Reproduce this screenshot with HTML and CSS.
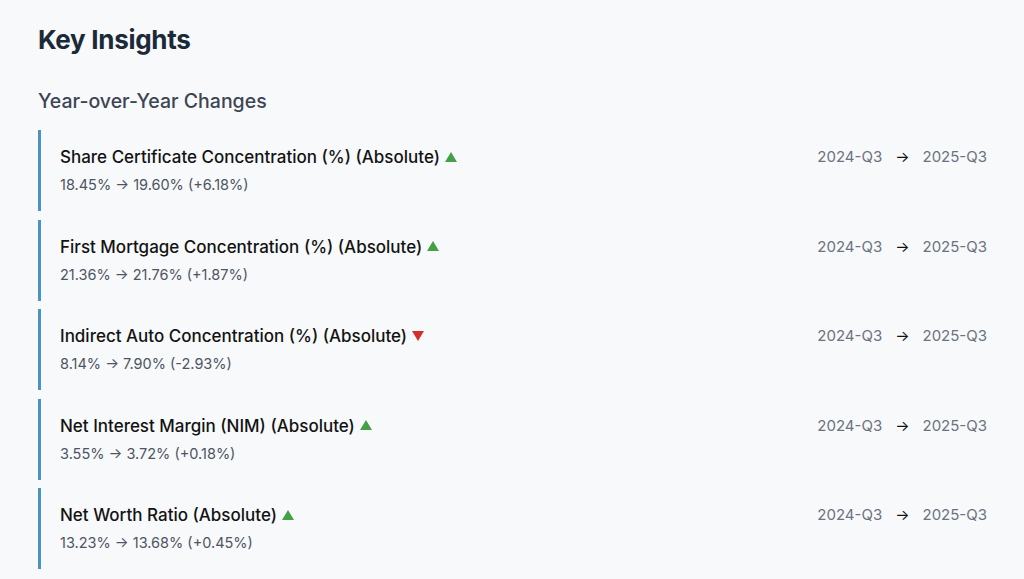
FILE: index.html
```html
<!DOCTYPE html>
<html>
<head>
<meta charset="utf-8">
<link rel="stylesheet" href="styles.css">
</head>
<body>
<main class="page">
  <h1 class="title">Key Insights</h1>
  <h2 class="subtitle">Year-over-Year Changes</h2>
  <div class="list">
    <div class="card">
      <div class="info">
        <div class="name">Share Certificate Concentration (%) (Absolute)<svg class="tri up" viewBox="0 0 12 10"><path d="M6 0L12 10H0Z"/></svg></div>
        <div class="value">18.45% → 19.60% (+6.18%)</div>
      </div>
      <div class="period"><span>2024-Q3</span><span class="arrow">→</span><span>2025-Q3</span></div>
    </div>
    <div class="card">
      <div class="info">
        <div class="name">First Mortgage Concentration (%) (Absolute)<svg class="tri up" viewBox="0 0 12 10"><path d="M6 0L12 10H0Z"/></svg></div>
        <div class="value">21.36% → 21.76% (+1.87%)</div>
      </div>
      <div class="period"><span>2024-Q3</span><span class="arrow">→</span><span>2025-Q3</span></div>
    </div>
    <div class="card">
      <div class="info">
        <div class="name">Indirect Auto Concentration (%) (Absolute)<svg class="tri down" viewBox="0 0 12 10"><path d="M0 0H12L6 10Z"/></svg></div>
        <div class="value">8.14% → 7.90% (-2.93%)</div>
      </div>
      <div class="period"><span>2024-Q3</span><span class="arrow">→</span><span>2025-Q3</span></div>
    </div>
    <div class="card">
      <div class="info">
        <div class="name">Net Interest Margin (NIM) (Absolute)<svg class="tri up" viewBox="0 0 12 10"><path d="M6 0L12 10H0Z"/></svg></div>
        <div class="value">3.55% → 3.72% (+0.18%)</div>
      </div>
      <div class="period"><span>2024-Q3</span><span class="arrow">→</span><span>2025-Q3</span></div>
    </div>
    <div class="card">
      <div class="info">
        <div class="name">Net Worth Ratio (Absolute)<svg class="tri up" viewBox="0 0 12 10"><path d="M6 0L12 10H0Z"/></svg></div>
        <div class="value">13.23% → 13.68% (+0.45%)</div>
      </div>
      <div class="period"><span>2024-Q3</span><span class="arrow">→</span><span>2025-Q3</span></div>
    </div>
  </div>
</main>
</body>
</html>
```
FILE: styles.css
```css
html, body {
  margin: 0;
  padding: 0;
  background: #f8f9fb;
}
body {
  font-family: Inter, "Noto Sans", sans-serif;
  overflow: hidden;
}
.page {
  padding: 24px 37px 0 38px;
}
.title {
  margin: 0;
  font-size: 26px;
  line-height: 32px;
  font-weight: 700;
  color: #1b2a38;
  letter-spacing: -0.3px;
}
.subtitle {
  margin: 33px 0 0 0;
  font-size: 19.5px;
  line-height: 24px;
  font-weight: 500;
  color: #3c4554;
}
.list {
  margin-top: 17px;
  display: flex;
  flex-direction: column;
  gap: 8.5px;
}
.card {
  height: 81px;
  box-sizing: border-box;
  border-left: 3px solid #4b93c4;
  padding: 16px 0 0 19px;
  display: flex;
  justify-content: space-between;
  align-items: flex-start;
}
.name {
  display: flex;
  align-items: center;
  font-size: 17px;
  line-height: 22px;
  font-weight: 500;
  color: #131313;
}
.tri {
  width: 12px;
  height: 10px;
  margin-left: 5px;
  margin-top: -1px;
}
.tri.up { fill: #43a047; }
.tri.down { fill: #d32f2f; }
.value {
  margin-top: 8px;
  font-size: 14.5px;
  line-height: 18px;
  color: #4d5563;
}
.period {
  display: flex;
  gap: 13px;
  font-size: 15px;
  line-height: 22px;
  color: #6b7280;
}
.arrow {
  color: #111;
}
```
